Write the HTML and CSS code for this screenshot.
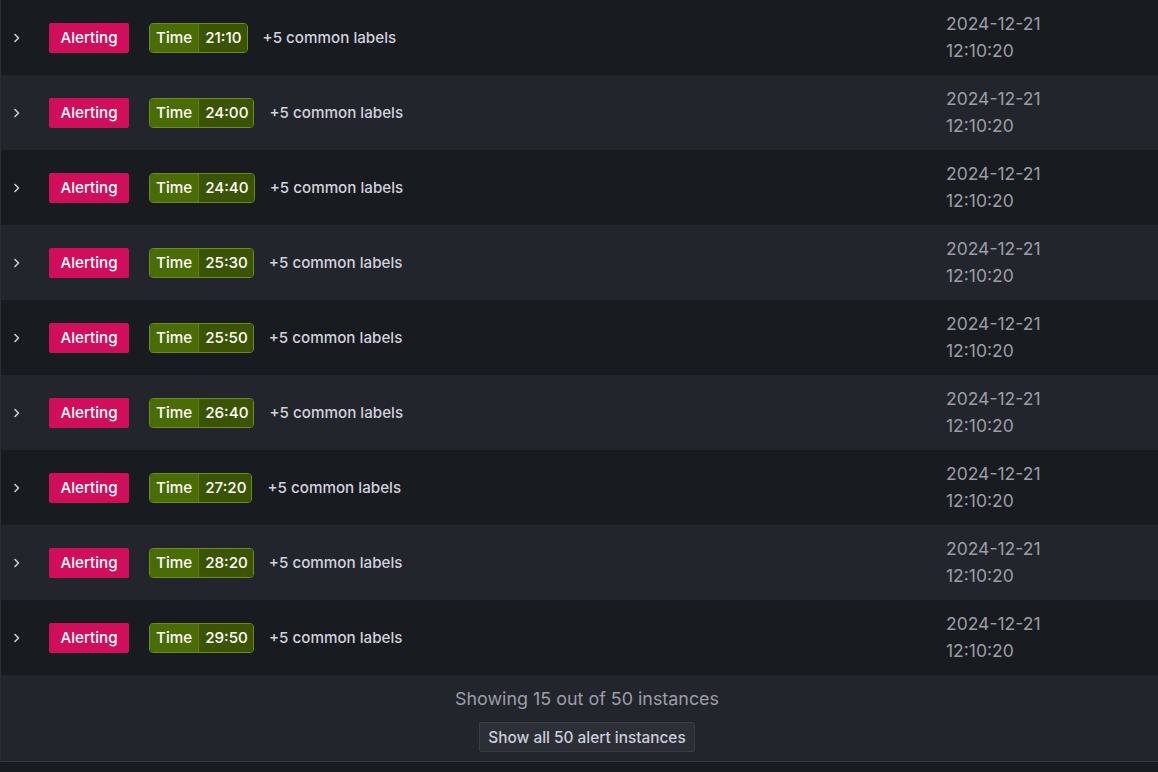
FILE: index.html
```html
<!DOCTYPE html>
<html>
<head>
<meta charset="utf-8">
<link rel="stylesheet" href="styles.css">
</head>
<body>
<div class="panel">
  <div class="list">
    <div class="row">
      <div class="chev"><svg width="8" height="10" viewBox="0 0 8 10"><path d="M2 1.5 L5.5 5 L2 8.5" fill="none" stroke="#ccccdc" stroke-width="1.6" stroke-linecap="round" stroke-linejoin="round"/></svg></div>
      <div class="labels"><span class="state">Alerting</span><span class="tag"><span class="k">Time</span><span class="v">21:10</span></span><span class="common">+5 common labels</span></div>
      <div class="date">2024-12-21<br>12:10:20</div>
    </div>
    <div class="row">
      <div class="chev"><svg width="8" height="10" viewBox="0 0 8 10"><path d="M2 1.5 L5.5 5 L2 8.5" fill="none" stroke="#ccccdc" stroke-width="1.6" stroke-linecap="round" stroke-linejoin="round"/></svg></div>
      <div class="labels"><span class="state">Alerting</span><span class="tag"><span class="k">Time</span><span class="v">24:00</span></span><span class="common">+5 common labels</span></div>
      <div class="date">2024-12-21<br>12:10:20</div>
    </div>
    <div class="row">
      <div class="chev"><svg width="8" height="10" viewBox="0 0 8 10"><path d="M2 1.5 L5.5 5 L2 8.5" fill="none" stroke="#ccccdc" stroke-width="1.6" stroke-linecap="round" stroke-linejoin="round"/></svg></div>
      <div class="labels"><span class="state">Alerting</span><span class="tag"><span class="k">Time</span><span class="v">24:40</span></span><span class="common">+5 common labels</span></div>
      <div class="date">2024-12-21<br>12:10:20</div>
    </div>
    <div class="row">
      <div class="chev"><svg width="8" height="10" viewBox="0 0 8 10"><path d="M2 1.5 L5.5 5 L2 8.5" fill="none" stroke="#ccccdc" stroke-width="1.6" stroke-linecap="round" stroke-linejoin="round"/></svg></div>
      <div class="labels"><span class="state">Alerting</span><span class="tag"><span class="k">Time</span><span class="v">25:30</span></span><span class="common">+5 common labels</span></div>
      <div class="date">2024-12-21<br>12:10:20</div>
    </div>
    <div class="row">
      <div class="chev"><svg width="8" height="10" viewBox="0 0 8 10"><path d="M2 1.5 L5.5 5 L2 8.5" fill="none" stroke="#ccccdc" stroke-width="1.6" stroke-linecap="round" stroke-linejoin="round"/></svg></div>
      <div class="labels"><span class="state">Alerting</span><span class="tag"><span class="k">Time</span><span class="v">25:50</span></span><span class="common">+5 common labels</span></div>
      <div class="date">2024-12-21<br>12:10:20</div>
    </div>
    <div class="row">
      <div class="chev"><svg width="8" height="10" viewBox="0 0 8 10"><path d="M2 1.5 L5.5 5 L2 8.5" fill="none" stroke="#ccccdc" stroke-width="1.6" stroke-linecap="round" stroke-linejoin="round"/></svg></div>
      <div class="labels"><span class="state">Alerting</span><span class="tag"><span class="k">Time</span><span class="v">26:40</span></span><span class="common">+5 common labels</span></div>
      <div class="date">2024-12-21<br>12:10:20</div>
    </div>
    <div class="row">
      <div class="chev"><svg width="8" height="10" viewBox="0 0 8 10"><path d="M2 1.5 L5.5 5 L2 8.5" fill="none" stroke="#ccccdc" stroke-width="1.6" stroke-linecap="round" stroke-linejoin="round"/></svg></div>
      <div class="labels"><span class="state">Alerting</span><span class="tag"><span class="k">Time</span><span class="v">27:20</span></span><span class="common">+5 common labels</span></div>
      <div class="date">2024-12-21<br>12:10:20</div>
    </div>
    <div class="row">
      <div class="chev"><svg width="8" height="10" viewBox="0 0 8 10"><path d="M2 1.5 L5.5 5 L2 8.5" fill="none" stroke="#ccccdc" stroke-width="1.6" stroke-linecap="round" stroke-linejoin="round"/></svg></div>
      <div class="labels"><span class="state">Alerting</span><span class="tag"><span class="k">Time</span><span class="v">28:20</span></span><span class="common">+5 common labels</span></div>
      <div class="date">2024-12-21<br>12:10:20</div>
    </div>
    <div class="row">
      <div class="chev"><svg width="8" height="10" viewBox="0 0 8 10"><path d="M2 1.5 L5.5 5 L2 8.5" fill="none" stroke="#ccccdc" stroke-width="1.6" stroke-linecap="round" stroke-linejoin="round"/></svg></div>
      <div class="labels"><span class="state">Alerting</span><span class="tag"><span class="k">Time</span><span class="v">29:50</span></span><span class="common">+5 common labels</span></div>
      <div class="date">2024-12-21<br>12:10:20</div>
    </div>
  </div>
  <div class="footer">
    <div class="showing">Showing 15 out of 50 instances</div>
    <button class="btn">Show all 50 alert instances</button>
  </div>
</div>
</body>
</html>
```
FILE: styles.css
```css
html, body {
  margin: 0;
  padding: 0;
  background: #181b1f;
  font-family: Inter, "Noto Sans", sans-serif;
  color: #ccccdc;
  overflow: hidden;
}
.panel {
  border-left: 1px solid #2a2d33;
  border-bottom: 1px solid #34373d;
  width: 1172px;
}
.row {
  display: grid;
  grid-template-columns: 48px 1fr 227px;
  align-items: center;
  height: 75px;
  background: #181b1f;
}
.row:nth-child(even) {
  background: #22252b;
}
.chev {
  display: flex;
  align-items: center;
  padding-left: 12px;
}
.chev svg { display: block; }
.labels {
  display: flex;
  align-items: center;
  gap: 20px;
  font-size: 15.2px;
  font-weight: 500;
}
.state {
  display: inline-flex;
  align-items: center;
  justify-content: center;
  height: 30px;
  width: 80px;
  box-sizing: border-box;
  background: #d10e5c;
  color: #fff;
  border-radius: 2px;
}
.tag {
  display: inline-flex;
  height: 30px;
  box-sizing: border-box;
  border: 1px solid #6b8d1d;
  border-radius: 4px;
  overflow: hidden;
  color: #fff;
  margin-right: -5px;
}
.tag .k {
  display: flex;
  align-items: center;
  padding: 0 6px;
  background: #4a6c05;
  border-right: 1px solid #5f7f15;
}
.tag .v {
  display: flex;
  align-items: center;
  padding: 0 6px 0 6px;
  margin-right: -1px;
  background: #3b5403;
}
.common {
  color: #d2d2de;
}
.date {
  font-size: 17.5px;
  line-height: 27px;
  color: #9d9da8;
  margin-top: -1px;
}
.footer {
  background: #22252b;
  height: 86px;
  display: flex;
  flex-direction: column;
  align-items: center;
  padding-top: 11px;
  box-sizing: border-box;
}
.showing {
  font-size: 17.9px;
  line-height: 25px;
  color: #9d9da8;
}
.btn {
  margin-top: 11px;
  height: 30px;
  padding: 0 8px;
  background: #2c2f35;
  border: 1px solid #383b41;
  border-radius: 2px;
  color: #ccccdc;
  font-family: Inter, "Noto Sans", sans-serif;
  font-size: 15.4px;
  font-weight: 500;
}
```
